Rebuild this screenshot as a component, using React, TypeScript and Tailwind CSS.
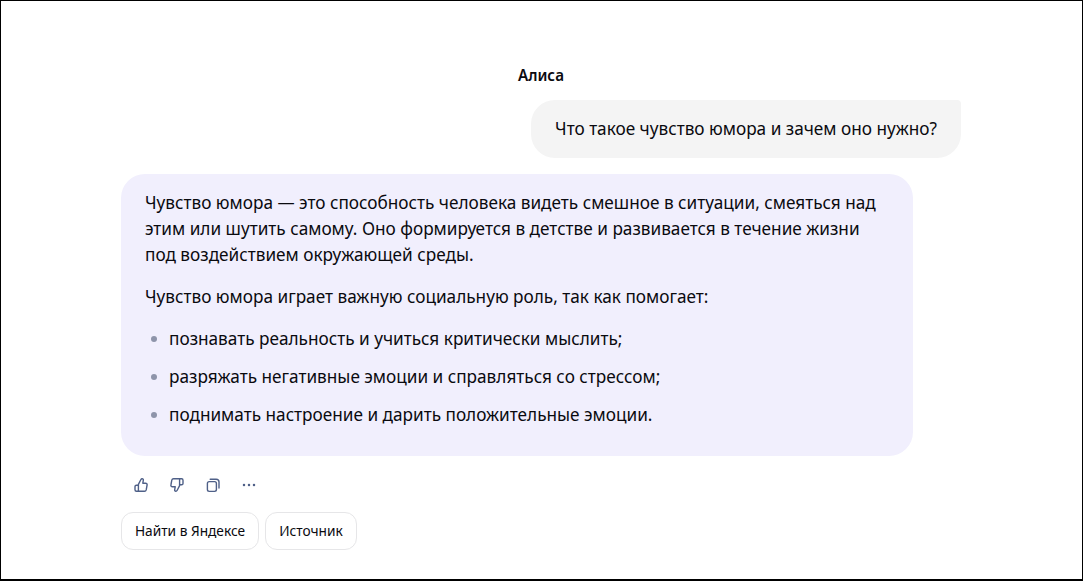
import React from "react";

const Thumb = ({ down = false }: { down?: boolean }) => (
  <svg width="16" height="16" viewBox="0 0 16 16" fill="none" stroke="#4f6088" strokeWidth="1.4" strokeLinejoin="round" strokeLinecap="round" className={down ? "rotate-180" : ""}>
    <path d="M5.4 7.4 7.8 2.7c.3-.6.7-1 1.3-1 .9 0 1.4.8 1.2 1.7L9.8 6.2h2.8c1 0 1.7.9 1.5 1.8l-.9 4.9c-.2.8-.8 1.4-1.7 1.4H5.4V7.4Z" />
    <path d="M5.4 8.2H3.4c-.8 0-1.4.6-1.4 1.4v3.2c0 .8.6 1.5 1.4 1.5h2" />
  </svg>
);

const Copy = () => (
  <svg width="16" height="16" viewBox="0 0 16 16" fill="none" stroke="#4f6088" strokeWidth="1.4" strokeLinecap="round">
    <rect x="2.4" y="4.6" width="9" height="9.8" rx="1.8" />
    <path d="M5.2 2.2h6C12.8 2.2 14 3.4 14 5v6" />
  </svg>
);

const Dots = () => (
  <svg width="16" height="16" viewBox="0 0 16 16" fill="#4f6088">
    <circle cx="3" cy="8" r="1.25" />
    <circle cx="8" cy="8" r="1.25" />
    <circle cx="13" cy="8" r="1.25" />
  </svg>
);

const items = [
  "познавать реальность и учиться критически мыслить;",
  "разряжать негативные эмоции и справляться со стрессом;",
  "поднимать настроение и дарить положительные эмоции.",
];

export default function App() {
  return (
    <div className="w-[1083px] h-[581px] bg-white border-t border-l border-r border-b-2 border-black text-[#0a0a0f] font-['Noto_Sans',sans-serif] text-[17.2px] leading-[26px] flex flex-col pl-[120px] pr-[121px] overflow-hidden">
      <div className="h-[99px] pt-[66px] text-center text-[15.2px] leading-[16px] font-semibold">Алиса</div>
      <div className="self-end bg-[#f4f4f4] rounded-[24px] rounded-tr-[4px] px-6 pt-4 pb-4 h-[58px]">
        Что такое чувство юмора и зачем оно нужно?
      </div>
      <div className="mt-4 w-[792px] h-[282px] bg-[#f1effd] rounded-[24px] px-6 pt-4">
        <p>
          Чувство юмора — это способность человека видеть смешное в ситуации, смеяться над этим или шутить самому. Оно формируется в детстве и развивается в течение жизни под воздействием окружающей среды.
        </p>
        <p className="mt-4">Чувство юмора играет важную социальную роль, так как помогает:</p>
        <ul className="mt-4 flex flex-col gap-3">
          {items.map((t) => (
            <li key={t} className="flex items-center">
              <span className="w-[6px] h-[6px] rounded-full bg-[#8e94aa] ml-[6px] mr-3" />
              {t}
            </li>
          ))}
        </ul>
      </div>
      <div className="mt-[21px] ml-3 flex gap-5 h-4 items-center">
        <Thumb />
        <Thumb down />
        <Copy />
        <Dots />
      </div>
      <div className="mt-[19px] flex gap-[6px] text-[13.7px] leading-[16px] font-normal">
        <div className="h-[38px] w-[138px] justify-center flex items-center rounded-[12px] border border-[#e6e6e8] bg-white">Найти в Яндексе</div>
        <div className="h-[38px] w-[92px] justify-center flex items-center rounded-[12px] border border-[#e6e6e8] bg-white">Источник</div>
      </div>
    </div>
  );
}
